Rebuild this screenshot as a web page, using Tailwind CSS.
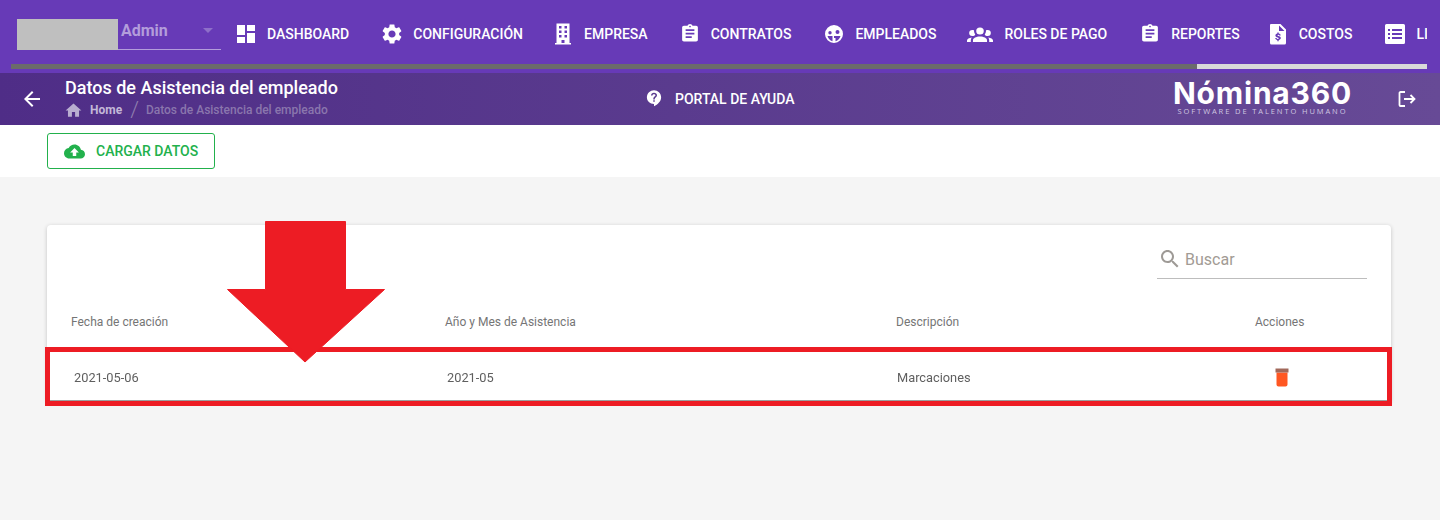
<!DOCTYPE html>
<html lang="es">
<head>
  <meta charset="UTF-8">
  <title>Datos de Asistencia del empleado</title>
  <script src="https://cdn.jsdelivr.net/npm/@tailwindcss/browser@4"></script>
</head>
<body class="bg-[#f5f5f5] h-[520px] overflow-hidden font-[Roboto,sans-serif] relative">

  <!-- top nav -->
  <header class="h-[73px] bg-[#673ab7] pl-[17px] pt-[19px] relative overflow-hidden">
    <div class="flex items-start text-white text-[14px] font-medium whitespace-nowrap w-[1410px] overflow-hidden">
      <div class="w-[204px] h-[31px] flex shrink-0 border-b border-[#b39ddb]">
        <div class="w-[101px] h-[31px] bg-[#bfbfbf]"></div>
        <span class="ml-[3px] text-[16px] font-bold text-[#b39ddb] leading-[23px]">Admin</span>
        <svg class="ml-[35px] mt-[9px]" width="10" height="5" viewBox="0 0 10 5"><path d="M0 0h10L5 5z" fill="#8e6fc9"/></svg>
      </div>
      <nav class="flex items-center h-[30px] ml-[13px]">
        <a class="flex items-center"><svg class="w-6 h-6" viewBox="0 0 24 24" fill="#fff"><path d="M3 13h8V3H3v10zm0 8h8v-6H3v6zm10 0h8V11h-8v10zm0-18v6h8V3h-8z"/></svg><span class="ml-[9px]">DASHBOARD</span></a>
        <a class="flex items-center ml-[31px]"><svg class="w-6 h-6" viewBox="0 0 24 24" fill="#fff"><path d="M19.14 12.94c.04-.3.06-.61.06-.94 0-.32-.02-.64-.07-.94l2.03-1.58c.18-.14.23-.41.12-.61l-1.92-3.32c-.12-.22-.37-.29-.59-.22l-2.39.96c-.5-.38-1.03-.7-1.62-.94l-.36-2.54c-.04-.24-.24-.41-.48-.41h-3.84c-.24 0-.43.17-.47.41l-.36 2.54c-.59.24-1.13.57-1.62.94l-2.39-.96c-.22-.08-.47 0-.59.22L2.74 8.87c-.12.21-.08.47.12.61l2.03 1.58c-.05.3-.09.63-.09.94s.02.64.07.94l-2.03 1.58c-.18.14-.23.41-.12.61l1.92 3.32c.12.22.37.29.59.22l2.39-.96c.5.38 1.03.7 1.62.94l.36 2.54c.05.24.24.41.48.41h3.84c.24 0 .44-.17.47-.41l.36-2.54c.59-.24 1.13-.56 1.62-.94l2.39.96c.22.08.47 0 .59-.22l1.92-3.32c.12-.22.07-.47-.12-.61l-2.01-1.58zM12 15.6c-1.98 0-3.6-1.62-3.6-3.6s1.62-3.6 3.6-3.6 3.6 1.62 3.6 3.6-1.62 3.6-3.6 3.6z"/></svg><span class="ml-[9px]">CONFIGURACIÓN</span></a>
        <a class="flex items-center ml-[28px]"><svg class="w-6 h-6" viewBox="0 0 24 24" fill="#fff"><path fill-rule="evenodd" d="M5.500 1.500h13v19.500h1.500v1.500H4V21h1.500zM8 4v2.500h2.500V4zm5.500 0v2.500H16V4zM8 8.500V11h2.500V8.500zm5.500 0V11H16V8.500zM8 13v2.500h2.500V13zm5.500 0v2.500H16V13zM10.500 18v3h3v-3z"/></svg><span class="ml-[9px]">EMPRESA</span></a>
        <a class="flex items-center ml-[30px]"><svg class="w-6 h-6" viewBox="0 0 24 24" fill="#fff"><path transform="translate(1.500 1) scale(.875)" d="M19 3h-4.180C14.400 1.840 13.300 1 12 1c-1.300 0-2.400.84-2.820 2H5c-1.100 0-2 .9-2 2v14c0 1.100.9 2 2 2h14c1.100 0 2-.9 2-2V5c0-1.100-.9-2-2-2zm-7 0c.55 0 1 .45 1 1s-.45 1-1 1-1-.45-1-1 .45-1 1-1zm2 14H7v-2h7v2zm3-4H7v-2h10v2zm0-4H7V7h10v2z"/></svg><span class="ml-[9px]">CONTRATOS</span></a>
        <a class="flex items-center ml-[31px]"><svg class="w-6 h-6" viewBox="0 0 24 24" fill="#fff"><path fill-rule="evenodd" d="M12 3a9 9 0 1 0 0 18 9 9 0 0 0 0-18zM8 9a1.700 1.700 0 1 1 0 3.400A1.700 1.700 0 0 1 8 9zm7.500-1a2 2 0 1 1 0 4 2 2 0 0 1 0-4zM5.500 14h5v5.200a7.500 7.500 0 0 1-5-5.200zm6.500 0h6.500a7.500 7.500 0 0 1-5 5.300V16h-1.500z"/></svg><span class="ml-[9px]">EMPLEADOS</span></a>
        <a class="flex items-center ml-[31px]"><svg class="w-[26px] h-6" viewBox="0 0 24 24" fill="#fff" preserveAspectRatio="none"><path d="M12 5.500A3.500 3.500 0 0 1 15.500 9 3.500 3.500 0 0 1 12 12.500 3.500 3.500 0 0 1 8.500 9 3.500 3.500 0 0 1 12 5.500M5 8c.56 0 1.080.15 1.530.42-.15 1.430.27 2.850 1.130 3.960C7.160 13.340 6.160 14 5 14a3 3 0 0 1-3-3 3 3 0 0 1 3-3m14 0a3 3 0 0 1 3 3 3 3 0 0 1-3 3c-1.160 0-2.160-.66-2.660-1.620.86-1.110 1.280-2.530 1.130-3.960.45-.27.97-.42 1.530-.42M5.500 18.250c0-2.070 2.910-3.750 6.500-3.750s6.500 1.680 6.500 3.750V20h-13v-1.750M0 20v-1.500c0-1.390 1.890-2.560 4.450-2.900-.59.68-.95 1.620-.95 2.650V20H0m24 0h-3.500v-1.750c0-1.030-.36-1.970-.95-2.650 2.560.34 4.450 1.510 4.450 2.900V20z"/></svg><span class="ml-[11px]">ROLES DE PAGO</span></a>
        <a class="flex items-center ml-[31px]"><svg class="w-6 h-6" viewBox="0 0 24 24" fill="#fff"><path transform="translate(1.500 1) scale(.875)" d="M19 3h-4.180C14.400 1.840 13.300 1 12 1c-1.300 0-2.400.84-2.820 2H5c-1.100 0-2 .9-2 2v14c0 1.100.9 2 2 2h14c1.100 0 2-.9 2-2V5c0-1.100-.9-2-2-2zm-7 0c.55 0 1 .45 1 1s-.45 1-1 1-1-.45-1-1 .45-1 1-1zm2 14H7v-2h7v2zm3-4H7v-2h10v2zm0-4H7V7h10v2z"/></svg><span class="ml-[9px]">REPORTES</span></a>
        <a class="flex items-center ml-[26px]"><svg class="w-6 h-6" viewBox="0 0 24 24" fill="#fff"><path fill-rule="evenodd" d="M5 2h9.500L20 7.500V21a1.500 1.500 0 0 1-1.500 1.500h-13A1.500 1.500 0 0 1 4 21V3a1 1 0 0 1 1-1zm8 1.500V9h5.500zM11.300 10.500v1.100c-1.100.2-1.900.9-1.900 1.900 0 1.200 1 1.600 2.300 2 .9.300 1.100.5 1.100.8 0 .4-.4.7-1 .7-.7 0-1.100-.3-1.200-.9H9.200c.1 1.100.9 1.800 2.100 2v1.100h1.400v-1.100c1.200-.2 2.100-.9 2.100-2 0-1.200-1-1.700-2.300-2.100-.9-.3-1.100-.5-1.100-.7 0-.4.3-.6.9-.6s.9.3 1 .7h1.400c-.1-1-.8-1.600-2-1.800v-1.100z"/></svg><span class="ml-[9px]">COSTOS</span></a>
        <a class="flex items-center ml-[31px]"><svg class="w-6 h-6" viewBox="0 0 24 24" fill="#fff"><path fill-rule="evenodd" d="M3.500 2h17A1.500 1.500 0 0 1 22 3.500v17a1.500 1.500 0 0 1-1.500 1.500h-17A1.500 1.500 0 0 1 2 20.500v-17A1.500 1.500 0 0 1 3.500 2zM5 7v2h2V7zm4 0v2h10V7zm-4 4v2h2v-2zm4 0v2h10v-2zm-4 4v2h2v-2zm4 0v2h10v-2z"/></svg><span class="ml-[9px]">LI</span></a>
      </nav>
    </div>
    <!-- scrollbar -->
    <div class="absolute left-[11px] top-[64px] w-[1416px] h-[5px] bg-[#d9d9d9]">
      <div class="w-[1186px] h-full bg-[#6b6b6b]"></div>
    </div>
  </header>

  <!-- sub header -->
  <div class="h-[52px] bg-gradient-to-r from-[#4f2d87] to-[#674a96] flex items-center text-white">
    <svg class="ml-[20px] w-6 h-6" viewBox="0 0 24 24" fill="#fff"><path d="M20 11H7.830l5.590-5.590L12 4l-8 8 8 8 1.410-1.410L7.830 13H20v-2z"/></svg>
    <div class="ml-[21px] w-[566px] h-full">
      <h1 class="text-[18px] font-medium leading-[21px] mt-[4px]">Datos de Asistencia del empleado</h1>
      <div class="flex items-center text-[12px] h-[18px] mt-[3px]">
        <svg class="w-[19px] h-[19px] -ml-[1px]" viewBox="0 0 24 24" fill="#b9aed0"><path d="M10 20v-6h4v6h5v-8h3L12 3 2 12h3v8z"/></svg>
        <span class="ml-[7px] font-bold text-[#c3b8d8]">Home</span>
        <span class="ml-[8px] text-[22px] font-light text-[#8f7eaf] leading-none">/</span>
        <span class="ml-[7px] font-medium text-[#8a76ad]">Datos de Asistencia del empleado</span>
      </div>
    </div>
    <svg class="w-[18px] h-[18px] -mt-[3px] ml-[14px]" viewBox="0 0 24 24" fill="#fff"><path fill-rule="evenodd" d="M12 1.500c-5 0-9.500 4-9.500 9.500 0 5 4 9 9.500 9v3c5-2.500 9.500-6.500 9.500-12 0-5.500-4.500-9.500-9.500-9.500zM13 17h-2v-2h2zm1.900-6.300c-.9.900-1.900 1.400-1.900 3.300h-2c0-2.600 1.100-3.300 2.100-4.200.5-.5.9-.9.900-1.400 0-.8-.9-1.500-2-1.500s-2 .7-2 1.800H8c0-2.200 1.800-3.800 4-3.800s4 1.500 4 3.500c0 1-.5 1.700-1.100 2.300z"/></svg>
    <span class="ml-[12px] text-[14px] font-medium whitespace-nowrap">PORTAL DE AYUDA</span>
    <div class="ml-[378px] w-[180px] flex flex-col items-center -mt-[3px]">
      <span class="font-[Inter,sans-serif] font-bold text-[30px] leading-[28px] tracking-[0.8px] whitespace-nowrap">Nómina360</span>
      <span class="font-[Open_Sans,sans-serif] text-[7.500px] leading-[9px] tracking-[1.900px] text-[#cfc6e0] whitespace-nowrap">SOFTWARE DE TALENTO HUMANO</span>
    </div>
    <svg class="ml-[45px] w-[18px] h-[18px]" viewBox="0 0 18 18" fill="none" stroke="#fff" stroke-width="1.800"><path d="M7 2H2.500A1 1 0 0 0 1.500 3v12a1 1 0 0 0 1 1H7M6 9h10.500M12.500 5l4 4-4 4"/></svg>
  </div>

  <!-- toolbar -->
  <div class="h-[52px] bg-white pl-[47px] pt-[8px]">
    <button class="w-[168px] h-[36px] border border-[#22b14c] rounded-[3px] flex items-center text-[#22b14c] text-[14px] font-medium">
      <svg class="ml-[16px] w-[21px] h-[21px]" viewBox="0 0 24 24" fill="#22b14c"><path d="M19.350 10.040C18.670 6.590 15.640 4 12 4 9.110 4 6.600 5.640 5.350 8.040 2.340 8.360 0 10.910 0 14c0 3.310 2.690 6 6 6h13c2.760 0 5-2.240 5-5 0-2.640-2.050-4.780-4.650-4.960zM14 13v4h-4v-4H7l5-5 5 5h-3z"/></svg>
      <span class="ml-[11px]">CARGAR DATOS</span>
    </button>
  </div>

  <!-- table card -->
  <main class="pl-[47px] pt-[48px]">
    <section class="w-[1344px] h-[176px] bg-white rounded-t-[4px] shadow-[0_1px_4px_rgba(0,0,0,0.2)]">
      <div class="h-[122px] relative">
        <div class="absolute right-[24px] top-[19px] w-[210px] h-[35px] border-b border-[#bdbdbd] flex items-start">
          <svg class="mt-[3px] ml-px w-6 h-6" viewBox="0 0 24 24" fill="#9e9a96"><path d="M15.500 14h-.79l-.28-.27C15.410 12.590 16 11.110 16 9.500 16 5.910 13.090 3 9.500 3S3 5.910 3 9.500 5.910 16 9.500 16c1.610 0 3.090-.59 4.230-1.570l.27.28v.79l5 4.990L20.490 19l-4.990-5zm-6 0C7.010 14 5 11.990 5 9.500S7.010 5 9.500 5 14 7.010 14 9.500 11.990 14 9.500 14z"/></svg>
          <span class="ml-[3px] text-[16px] leading-[32px] text-[#a29b94]">Buscar</span>
        </div>
        <div class="grid grid-cols-[374px_451px_359px_auto] absolute left-[24px] right-0 top-[89px] text-[12px] leading-[16px] text-[#757575]">
          <span>Fecha de creación</span>
          <span>Año y Mes de Asistencia</span>
          <span>Descripción</span>
          <span>Acciones</span>
        </div>
      </div>
      <!-- resaltado -->
      <div class="relative -ml-[2px] w-[1347px] h-[59px] bg-white border-[5px] border-[#ed1c24] shadow-[inset_0_-1px_0_#9e9e9e] grid grid-cols-[373px_450px_373px_auto] items-center pl-[24px] text-[12.800px] text-[#5f5f5f]">
        <span class="mt-[2px] blur-[0.7px]">2021-05-06</span>
        <span class="mt-[2px] blur-[0.7px]">2021-05</span>
        <span class="mt-[2px] blur-[0.7px]">Marcaciones</span>
        <svg class="w-6 h-6 blur-[0.5px]" viewBox="0 0 24 24" preserveAspectRatio="none"><path fill="#ff5722" d="M6.500 7.500h11v12c0 1.100-.9 2-2 2h-7c-1.100 0-2-.9-2-2z"/><path fill="#a1685a" d="M5.500 3.500h13v4h-13z"/></svg>
      </div>
    </section>
  </main>

  <!-- flecha -->
  <svg class="absolute left-[227px] top-[221px]" width="158" height="142" viewBox="0 0 158 142"><path fill="#ed1c24" stroke="#ed1c24" stroke-linejoin="round" d="M38.500.5h80v68h39L78 141 .5 68.500h38z"/></svg>
</body>
</html>
